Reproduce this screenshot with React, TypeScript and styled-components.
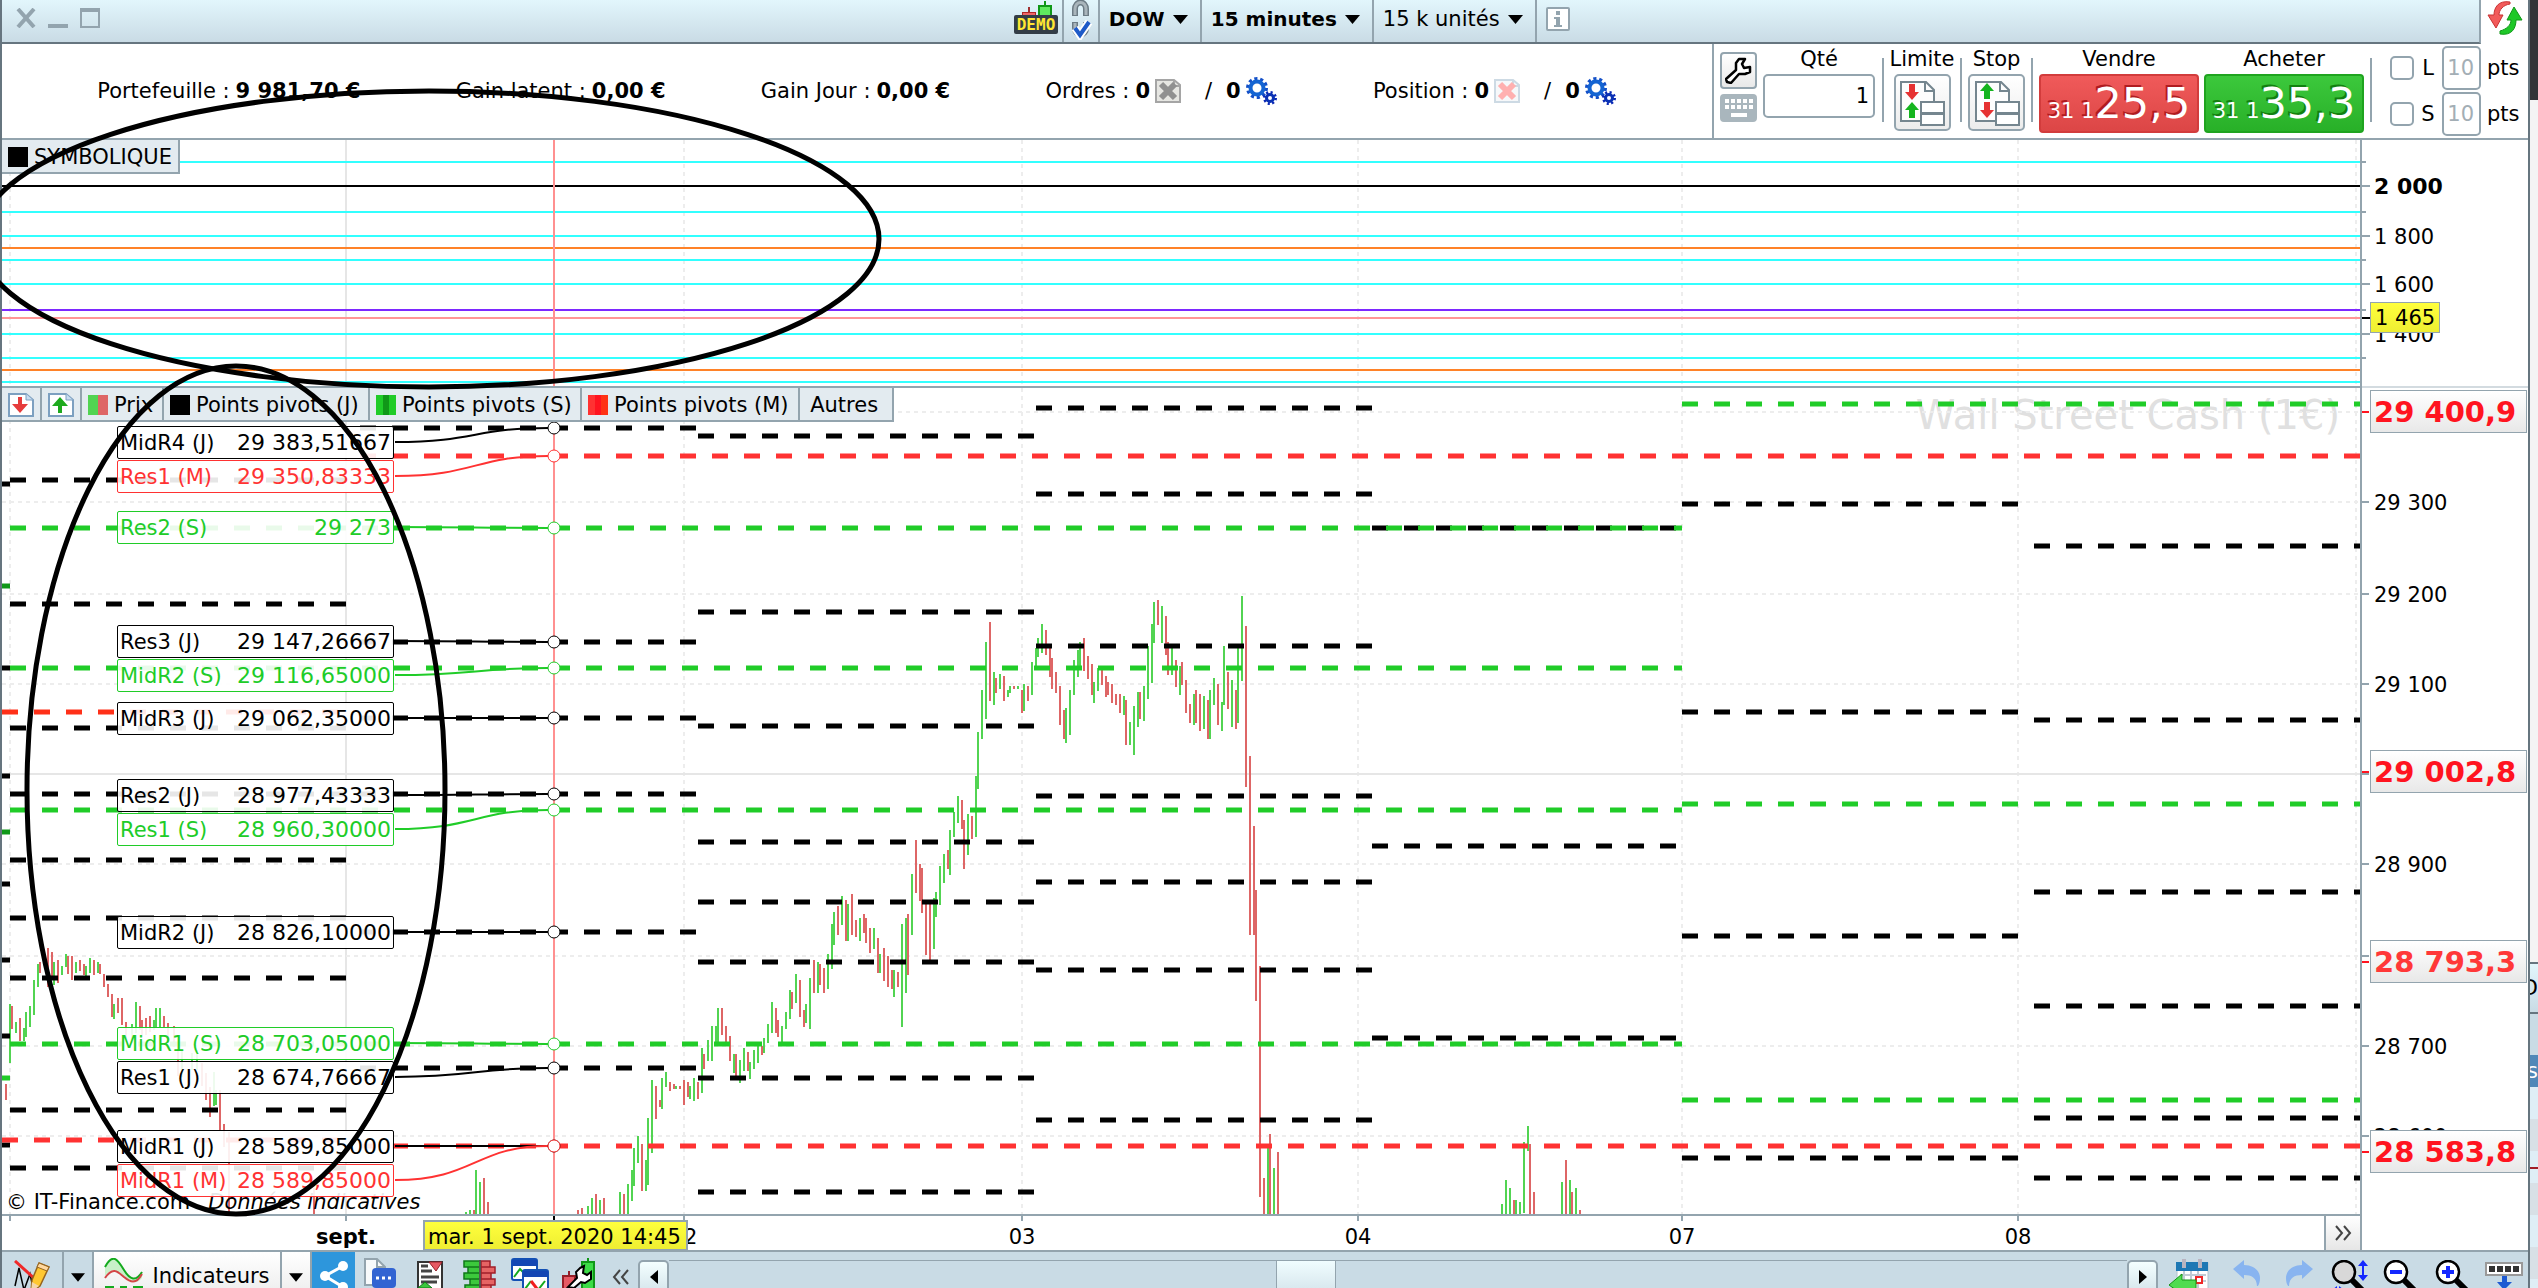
import React from "react";
import styled, { createGlobalStyle } from "styled-components";

const INK = "#000";
const EDGE = "#93a4ae";
const FRAME = "#66757f";
const BAR = "#c9dbe5";
const GREEN = "#20cc28";
const RED = "#ff3232";
const UP = "#52d452";
const DOWN = "#de6666";

const GlobalStyle = createGlobalStyle`
  *, *::before, *::after { box-sizing: border-box; }
  html, body, #root { height: 100%; }
  body { margin: 0; overflow: hidden; background: #fff; }
  body, button, input, select {
    font-family: "DejaVu Sans", Verdana, sans-serif;
    font-size: 21px;
    color: ${INK};
  }
  button, input, select { margin: 0; padding: 0; }
  svg { display: block; }
`;

/* ---------- shell ---------- */

const Desktop = styled.div`
  position: relative;
  display: flex;
  height: 100vh;
  overflow: hidden;
`;

const Window = styled.main`
  flex: 1;
  min-width: 0;
  display: flex;
  flex-direction: column;
  border: solid ${FRAME};
  border-width: 0 2px;
`;

const Behind = styled.aside`
  width: 8px;
  display: flex;
  flex-direction: column;
  overflow: hidden;
`;

const Slice = styled.div<{ $h: number; $bg: string; $line?: string; $ink?: string }>`
  flex: 0 0 ${(p) => p.$h}px;
  display: flex;
  align-items: center;
  justify-content: flex-end;
  background: ${(p) => p.$bg};
  border-bottom: ${(p) => (p.$line ? `2px solid ${p.$line}` : "0")};
  color: ${(p) => p.$ink || INK};
`;

const Annotations = styled.svg`
  position: absolute;
  inset: 0;
  width: 100%;
  height: 100%;
  pointer-events: none;
`;

/* ---------- title bar ---------- */

const TitleRow = styled.header`
  display: flex;
  height: 44px;
`;

const TitleBar = styled.div`
  flex: 1;
  display: flex;
  background: linear-gradient(#e2f6fc, ${BAR});
  border-bottom: 2px solid ${FRAME};
  border-right: 2px solid ${EDGE};
`;

const TitleSide = styled.div<{ $grow: number }>`
  flex: ${(p) => p.$grow} 1 0;
  display: flex;
  gap: 12px;
  padding: 8px 14px;
`;

const PlainButton = styled.button`
  border: 0;
  background: none;
  display: flex;
  align-items: flex-start;
  justify-content: center;
`;

const TitleCell = styled.div`
  display: flex;
  align-items: center;
  gap: 8px;
  height: 42px;
  padding: 0 12px 4px 9px;
  border-left: 2px solid ${EDGE};
`;

const IconCell = styled.div<{ $w: number; $line?: boolean }>`
  width: ${(p) => p.$w}px;
  display: flex;
  justify-content: center;
  border-left: ${(p) => (p.$line ? `2px solid ${EDGE}` : "0")};
`;

const FlatSelect = styled.select<{ $bold?: boolean }>`
  appearance: none;
  border: 0;
  background: none;
  font-size: ${(p) => (p.$bold ? 20 : 21)}px;
  font-weight: ${(p) => (p.$bold ? 700 : 400)};
`;

const LinkCell = styled.div`
  width: 47px;
  display: flex;
  justify-content: center;
`;

/* ---------- account bar ---------- */

const AccountRow = styled.section`
  display: flex;
  height: 96px;
  border-bottom: 2px solid ${EDGE};
`;

const Account = styled.div`
  flex: 1;
  display: flex;
  align-items: center;
  justify-content: space-evenly;
  border-right: 2px solid ${EDGE};
  white-space: nowrap;
`;

const Figure = styled.div`
  display: flex;
  align-items: center;
  gap: 6px;
`;

const Slash = styled.span`
  padding: 0 8px 0 18px;
`;

const Pair = styled.span`
  display: flex;
  align-items: center;
  gap: 5px;
`;

/* ---------- order panel ---------- */

const Orders = styled.form`
  flex: 0 0 814px;
  display: flex;
  padding-left: 6px;
`;

const Tools = styled.div`
  display: flex;
  flex-direction: column;
  gap: 5px;
  width: 37px;
  margin: 8px 5px 0 0;
`;

const ToolButton = styled.button<{ $h: number; $solid?: boolean }>`
  height: ${(p) => p.$h}px;
  display: flex;
  align-items: center;
  justify-content: center;
  border: 2px solid ${(p) => (p.$solid ? "#a9b6bd" : EDGE)};
  border-radius: 4px;
  background: ${(p) => (p.$solid ? "#a9b6bd" : "linear-gradient(#fff, #e9e9e9)")};
`;

const Column = styled.div<{ $w: number }>`
  width: ${(p) => p.$w}px;
  display: flex;
  flex-direction: column;
  align-items: center;
`;

const ColumnLabel = styled.label`
  line-height: 30px;
  white-space: nowrap;
`;

const Split = styled.div`
  width: 2px;
  height: 64px;
  margin: 14px 6px 0;
  background: ${EDGE};
`;

const Field = styled.input<{ $w: number; $muted?: boolean }>`
  width: ${(p) => p.$w}px;
  height: 44px;
  border: 2px solid ${EDGE};
  border-radius: 5px;
  background: #fff;
  text-align: right;
  padding-right: ${(p) => (p.$muted ? 5 : 4)}px;
  color: ${(p) => (p.$muted ? "#a3aeb5" : INK)};
`;

const ModeButton = styled.button`
  width: 57px;
  height: 57px;
  display: flex;
  align-items: center;
  justify-content: center;
  border: 2px solid ${EDGE};
  border-radius: 5px;
  background: linear-gradient(#fff, #ececec);
`;

const PriceButton = styled.button<{ $side: "sell" | "buy" }>`
  width: 160px;
  height: 59px;
  border-radius: 4px;
  border: 2px solid ${(p) => (p.$side === "sell" ? "#d23c3c" : "#1fa41f")};
  background: ${(p) =>
    p.$side === "sell" ? "linear-gradient(#f05a5a, #dc4646)" : "linear-gradient(#3cc83c, #28b028)"};
  color: #fff;
  text-shadow: -2px -2px 0 ${(p) => (p.$side === "sell" ? "#b01c20" : "#12800f")};
  white-space: nowrap;
  line-height: 54px;
`;

const BigPrice = styled.span`
  font-size: 43px;
`;

const Deals = styled.div`
  display: flex;
  gap: 5px;
`;

const Guards = styled.div`
  display: flex;
  flex-direction: column;
  gap: 2px;
  padding: 2px 0 0 12px;
`;

const Guard = styled.div`
  display: flex;
  align-items: center;
  gap: 6px;
  height: 44px;
`;

const Check = styled.input`
  appearance: none;
  width: 24px;
  height: 24px;
  border: 2px solid ${EDGE};
  border-radius: 5px;
  background: #fff;
`;

const GuardLabel = styled.label`
  width: 16px;
  text-align: center;
`;

/* ---------- charts ---------- */

const ChartRow = styled.section<{ $grow: number }>`
  flex: ${(p) => p.$grow} 1 0;
  min-height: 0;
  display: flex;
`;

const Plot = styled.div`
  position: relative;
  flex: 1;
  min-width: 0;
  overflow: hidden;
  border: solid ${EDGE};
  border-width: 0 2px 2px 0;
`;

const Axis = styled.div<{ $line?: boolean }>`
  position: relative;
  flex: 0 0 166px;
  overflow: hidden;
  border-bottom: ${(p) => (p.$line ? "2px solid #d3dbe0" : "0")};
`;

const Drawing = styled.svg`
  position: absolute;
  inset: 0;
  width: 100%;
  height: 100%;
`;

const Legend = styled.div`
  position: absolute;
  top: 0;
  left: 0;
  display: flex;
  height: 34px;
  border-bottom: 2px solid ${EDGE};
  background: #e3ebf0;
`;

const LegendItem = styled.button<{ $w: number }>`
  width: ${(p) => p.$w}px;
  display: flex;
  align-items: center;
  justify-content: flex-start;
  gap: 6px;
  padding: 1px 5px 0 6px;
  border: 0;
  border-right: 2px solid ${EDGE};
  background: none;
  white-space: nowrap;
`;

const Swatch = styled.span<{ $bg: string }>`
  flex: 0 0 20px;
  height: 20px;
  background: ${(p) => p.$bg};
`;

const Readout = styled.div<{ $y: number; $ink: string }>`
  position: absolute;
  left: 115px;
  top: ${(p) => p.$y - 388}px;
  width: 277px;
  height: 33px;
  display: flex;
  align-items: baseline;
  justify-content: space-between;
  padding: 0 2px;
  border: 1px solid ${(p) => p.$ink};
  border-radius: 2px;
  background: rgba(255, 255, 255, 0.9);
  color: ${(p) => p.$ink};
  line-height: 32px;
  white-space: nowrap;
`;

const ReadoutValue = styled.span`
  font-size: 22px;
`;

const Watermark = styled.div`
  position: absolute;
  top: 2px;
  right: 20px;
  font-size: 40px;
  line-height: 50px;
  color: #e0e0e0;
  white-space: nowrap;
`;

const Credit = styled.div`
  position: absolute;
  left: 4px;
  bottom: 0;
  display: flex;
  gap: 18px;
  line-height: 24px;
  white-space: nowrap;
`;

const PriceTag = styled.div<{ $y: number; $soft?: boolean }>`
  position: absolute;
  left: 8px;
  right: 1px;
  top: ${(p) => p.$y - 388}px;
  height: 43px;
  padding-left: 3px;
  border: 1px solid ${EDGE};
  background: linear-gradient(#fff, #e8e8e8);
  color: ${(p) => (p.$soft ? "#ff3838" : "#ff1420")};
  font-size: 29px;
  font-weight: 700;
  line-height: 42px;
  white-space: nowrap;
`;

const CursorTag = styled.div`
  position: absolute;
  left: 8px;
  top: 162px;
  width: 70px;
  height: 31px;
  padding-left: 4px;
  border: 1px solid ${EDGE};
  background: linear-gradient(#ffff3c, #eeee32);
  line-height: 30px;
  white-space: nowrap;
`;

/* ---------- time axis ---------- */

const TimeRow = styled.div`
  display: flex;
  height: 36px;
  border-bottom: 2px solid ${EDGE};
`;

const TimeScale = styled.div`
  position: relative;
  flex: 1;
  overflow: hidden;
`;

const DateTag = styled.div`
  position: absolute;
  left: 421px;
  top: 4px;
  width: 265px;
  height: 30px;
  padding-left: 3px;
  border: solid ${EDGE};
  border-width: 2px 2px 1px;
  background: linear-gradient(#ffff3c, #eeee32);
  line-height: 30px;
  white-space: nowrap;
`;

const MoreButton = styled.button`
  width: 38px;
  margin-right: 166px;
  display: flex;
  align-items: center;
  justify-content: center;
  border: solid ${EDGE};
  border-width: 0 2px;
  background: linear-gradient(#fff, #e6e6e6);
`;

/* ---------- bottom toolbar ---------- */

const Toolbar = styled.footer`
  display: flex;
  flex: 0 0 36px;
  overflow: hidden;
  background: ${BAR};
`;

const ToolCell = styled.button<{ $w: number; $bg?: string; $line?: boolean; $top?: number }>`
  flex: 0 0 ${(p) => p.$w}px;
  height: 36px;
  display: flex;
  align-items: flex-start;
  justify-content: center;
  gap: 8px;
  padding-top: ${(p) => p.$top ?? 8}px;
  border: 0;
  border-right: ${(p) => (p.$line ? `2px solid ${EDGE}` : "0")};
  background: ${(p) => p.$bg || "none"};
  overflow: hidden;
  white-space: nowrap;
`;

const CellText = styled.span`
  line-height: 36px;
`;

const ScrollButton = styled.button`
  flex: 0 0 31px;
  height: 40px;
  margin-top: 8px;
  display: flex;
  justify-content: center;
  padding-top: 8px;
  border: 2px solid ${EDGE};
  border-radius: 5px 5px 0 0;
  background: linear-gradient(#f4ffff, #cfe0e8);
`;

const Track = styled.div`
  flex: 1;
  height: 40px;
  margin-top: 8px;
  display: flex;
  border-top: 1px solid ${EDGE};
`;

const TrackGap = styled.div<{ $grow: number }>`
  flex: ${(p) => p.$grow} 1 0;
`;

const Thumb = styled.div`
  width: 60px;
  border: solid ${EDGE};
  border-width: 0 1px;
  background: linear-gradient(#f0fdff, #cfdfe7);
`;

/* ---------- data ---------- */

type Line = [ink: string, from: number, to: number, ys: number[]];

const PIVOTS: Line[] = [
  [INK, 2, 10, [484, 668, 776, 884, 960, 1036, 1145]],
  ["#109818", 2, 10, [586, 832]],
  [GREEN, 2, 10, [1078]],
  [INK, 10, 346, [480, 604, 728, 794, 860, 918, 978, 1110, 1168]],
  [INK, 360, 697, [428, 642, 718, 794, 932, 1068]],
  [INK, 698, 1034, [436, 612, 726, 842, 902, 962, 1078, 1192]],
  [INK, 1036, 1372, [408, 494, 646, 796, 882, 970, 1120]],
  [INK, 1372, 1682, [528, 846, 1038]],
  [INK, 1682, 2018, [504, 712, 936, 1158]],
  [INK, 2034, 2360, [546, 720, 892, 1006, 1118, 1178]],
  ["#ff3018", 2, 346, [712]],
  [RED, 2, 346, [1140]],
  [RED, 360, 2360, [456, 1146]],
  [GREEN, 10, 1682, [528, 668, 810, 1044]],
  [GREEN, 1682, 2360, [404, 804, 1100]],
];

type Batch = { x: number; y: number; sx: number; sy: number; bars: string };

/* Each bar is "x high low", prefixed by + for a rise and - for a fall. */
const BATCHES: Batch[] = [
  {
    x: 0, y: 830, sx: 0.4464, sy: 0.3333,
    bars: `-13 763 812|+22 522 698|-27 528 597|+36 576 609|-45 564 633|+54 594 633|+58 546 621|+67 528 591|+76 450 555|+85 402 471|-89 396 430|-107 354 470|-117 366 450|+121 396 465|-130 390 458|+139 408 435|+148 372 412|-152 378 432|-161 378 450|+170 396 430|-179 390 423|-188 402 434|+192 408 438|+201 384 428|-210 390 435|+219 396 428|-224 402 432|-233 432 471|-242 462 501|-251 492 562|+255 522 567|-264 504 549|-273 504 585|-282 576 625|+295 582 640|+304 516 610|-313 528 600|-318 570 620|-327 564 615|-336 558 605|+345 570 600|+349 534 590|+358 534 592|-367 558 595|-376 580 640|-390 588 650|-399 640 740|+408 660 740|+430 670 720|+441 660 720|-452 700 770|-461 730 812|-470 770 860|+480 727 830|+484 780 825|-493 780 900|-502 882 950|-512 905 1152|-704 1075 1152|+1044 1146 1152|+1053 1140 1152|-1062 1140 1152|+1066 1020 1152|+1075 1056 1152|-1084 1044 1152|-1093 1116 1152|-1294 1140 1152|-1303 1134 1152|+1317 1128 1152|+1326 1104 1152|-1335 1092 1152|+1344 1110 1152|-1353 1104 1152|+1389 1086 1152|-1398 1092 1152|+1407 1062 1152|+1415 1020 1112|+1420 955 1068|+1429 918 1000`,
  },
  {
    x: 640, y: 560, sx: 0.4337, sy: 0.4209,
    bars: `-4 1387 1498|+14 1425 1498|+18 1326 1485|+27 1235 1409|-37 1250 1328|-46 1283 1300|+50 1231 1304|+60 1216 1252|-69 1240 1262|-79 1245 1257|+83 1250 1257|-93 1250 1257|-101 1235 1295|-111 1240 1276|+115 1250 1281|+124 1231 1285|-133 1240 1281|+143 1159 1266|-147 1174 1209|+156 1140 1190|+166 1107 1190|+175 1107 1145|+180 1064 1150|-189 1064 1128|-198 1107 1145|-207 1131 1190|+216 1174 1219|-221 1174 1228|+230 1188 1243|+240 1159 1214|-249 1169 1214|+253 1193 1233|+263 1164 1209|+272 1150 1195|-281 1155 1176|+285 1136 1171|+295 1102 1147|+304 1050 1124|-313 1064 1124|-318 1093 1133|+327 1107 1145|+336 1074 1114|+346 1022 1090|-350 1026 1067|+359 984 1052|-368 998 1086|-378 1069 1109|+382 1055 1100|+392 993 1114|-401 950 1029|+410 955 1029|-415 960 1010|-424 969 1029|+433 936 1019|+442 865 972|+447 836 915|-456 822 891|+465 798 867|-475 808 905|+479 817 905|-489 794 891|-498 855 896|+507 851 905|-516 841 886|-521 851 910|-530 874 934|+539 874 924|-548 898 981|+553 936 981|-562 922 1000|-572 941 1014|-581 974 1019|+585 974 1038|-595 979 1014|+604 865 1109|+613 851 1029|-618 841 986|+627 746 891|-636 665 791|-646 722 810|-650 732 839|-659 815 938|-668 815 950|+678 803 924|+683 789 848|+691 727 820|+701 698 767|-710 689 734|+715 641 748|+724 599 658|+733 561 625|-742 570 639|-747 618 734|+756 603 701|-765 608 663|+774 513 658|+779 409 544|+788 309 425|+797 195 378|-807 147 335|+816 266 344|-821 280 316|+830 271 306|-839 276 335|+848 309 325|+853 299 316|-862 299 306|+871 299 306|-881 309 363|+885 295 359|-894 299 335|+904 242 321|+913 209 255|+917 185 230|+927 152 221|-936 166 226|-945 209 278|-950 233 306|-959 266 316|-968 299 392|-977 356 425|+982 352 435|+991 309 416|+1000 238 321|+1010 214 278|+1014 195 255|-1024 185 264|-1033 228 283|-1042 247 321|+1047 290 340|+1056 257 311|-1065 257 297|-1074 276 325|-1079 290 321|-1088 295 340|-1097 318 344|-1107 318 363|+1116 323 368|-1120 333 440|+1130 385 440|+1139 347 463|+1148 314 397|-1153 314 378|+1162 299 382|+1171 204 330|+1180 152 292|+1185 100 197|-1194 95 154|+1203 109 197|-1213 133 226|-1217 195 273|+1227 209 273|-1236 238 302|+1245 252 321|-1249 242 297|-1259 285 363|-1268 342 387|+1277 318 392|-1282 309 387|-1291 318 406|+1300 323 402|-1309 333 425|+1314 309 425|+1323 280 344|-1332 295 392|+1342 337 406|+1346 204 344|-1356 266 354|+1365 285 397|-1374 309 402|+1379 209 387|+1388 86 287|-1397 157 539|-1407 466 891|-1416 632 891|-1420 784 1048|-1429 965 1513|-1439 1468 1554|+1448 1395 1554|-1452 1364 1554|+1462 1444 1554|-1471 1406 1554`,
  },
  {
    x: 1300, y: 380, sx: 0.4719, sy: 0.5357,
    bars: `+428 1538 1557|+436 1493 1557|+445 1508 1557|-453 1531 1557|+458 1531 1557|+466 1534 1557|+475 1422 1555|+483 1393 1439|-487 1427 1557|-496 1516 1557|+555 1497 1557|-564 1456 1557|+572 1493 1557|-576 1516 1557|+585 1508 1557|-593 1549 1557`,
  },
];

const READOUTS: { name: string; value: string; ink: string; y: number; target: number }[] = [
  { name: "MidR4 (J)", value: "29 383,51667", ink: INK, y: 426, target: 428 },
  { name: "Res1 (M)", value: "29 350,83333", ink: RED, y: 460, target: 456 },
  { name: "Res2 (S)", value: "29 273", ink: GREEN, y: 511, target: 528 },
  { name: "Res3 (J)", value: "29 147,26667", ink: INK, y: 625, target: 642 },
  { name: "MidR2 (S)", value: "29 116,65000", ink: GREEN, y: 659, target: 668 },
  { name: "MidR3 (J)", value: "29 062,35000", ink: INK, y: 702, target: 718 },
  { name: "Res1 (S)", value: "28 960,30000", ink: GREEN, y: 813, target: 810 },
  { name: "Res2 (J)", value: "28 977,43333", ink: INK, y: 779, target: 794 },
  { name: "MidR2 (J)", value: "28 826,10000", ink: INK, y: 916, target: 932 },
  { name: "MidR1 (S)", value: "28 703,05000", ink: GREEN, y: 1027, target: 1044 },
  { name: "Res1 (J)", value: "28 674,76667", ink: INK, y: 1061, target: 1068 },
  { name: "MidR1 (J)", value: "28 589,85000", ink: INK, y: 1130, target: 1146 },
  { name: "MidR1 (M)", value: "28 589,85000", ink: RED, y: 1164, target: 1146 },
];

const DAYS = [10, 684, 1022, 1358, 1682, 2018, 2356];
const LEVELS = [412, 502, 594, 684, 864, 956, 1046, 1136];

const SYMBOL_LINES: [string, number][] = [
  ["#32ffff", 162], [INK, 186], ["#32ffff", 212], ["#32ffff", 236], ["#ff8228", 248],
  ["#32ffff", 260], ["#32ffff", 284], ["#7d28ff", 310], ["#ff9696", 318], ["#32ffff", 334],
  ["#32ffff", 358], ["#ff8228", 370], ["#32ffff", 382],
];

/* ---------- drawings ---------- */

const Caret = ({ size = 15 }: { size?: number }) => (
  <svg width={size} height="9" viewBox="0 0 15 9" aria-hidden="true"><path d="M0 0h15L7.500 9z" /></svg>
);

const DemoIcon = () => (
  <svg width="44" height="36" viewBox="0 0 44 36" aria-label="Démo">
    <path d="M15 7v6" stroke="#a03030" strokeWidth="2" />
    <path d="M31 1v6" stroke="#109818" strokeWidth="2" />
    <rect x="8.500" y="12.500" width="13" height="8" fill="#e66" stroke="#b02828" />
    <rect x="25" y="6" width="12" height="14" fill="#5fe85f" stroke="#109818" strokeWidth="2" />
    <rect x="0" y="15" width="44" height="19" rx="2" fill="#333d47" />
    <text x="22" y="30" textAnchor="middle" fontFamily="DejaVu Sans Mono" fontWeight="700" fontSize="16" fill="#ffe632">DEMO</text>
  </svg>
);

const ClipIcon = () => (
  <svg width="24" height="40" viewBox="0 0 24 40" aria-hidden="true">
    <g fill="none" stroke="#6c7b84" strokeWidth="6">
      <path d="M6 16V9a5 6 0 0 1 11 0v7" />
      <path d="M6 22v6a5 6 0 0 0 11 0v-6" />
    </g>
    <g fill="none" stroke="#a9b5bb" strokeWidth="3">
      <path d="M6 15V9a5 6 0 0 1 11 0v6" />
      <path d="M6 23v5a5 6 0 0 0 11 0v-5" />
    </g>
    <path d="M6 28l5 7 9-13" fill="none" stroke="#fff" strokeWidth="8" />
    <path d="M6 28l5 7 9-13" fill="none" stroke="#1e5ac8" strokeWidth="4" />
  </svg>
);

const InfoIcon = () => (
  <svg width="24" height="24" viewBox="0 0 24 24" aria-hidden="true">
    <rect x="1" y="1" width="22" height="22" rx="1" fill="#fff" stroke={EDGE} strokeWidth="2" />
    <path d="M10 4h4v4h-4zM8 10h6v8h2v2H8v-2h2v-6H8z" fill={EDGE} />
  </svg>
);

const LinkIcon = () => (
  <svg width="38" height="36" viewBox="0 0 38 36" aria-hidden="true">
    <path d="M24 2C12 0 8 8 8 15H2l8 13 7-13h-4c0-5 4-10 11-11z" fill="#f25a5a" stroke="#c83232" />
    <path d="M14 34c12 2 16-6 16-14h6L28 7l-7 13h4c0 5-4 9-11 11z" fill="#1ec828" stroke="#109818" />
  </svg>
);

const DocCross = ({ paper, edge, cross }: { paper: string; edge: string; cross: string }) => (
  <svg width="26" height="24" viewBox="0 0 26 24" aria-hidden="true">
    <path d="M1 1h18l6 5v17H1z" fill={paper} stroke={edge} strokeWidth="2" />
    <path d="M19 1v6h6" fill="none" stroke={edge} strokeWidth="2" />
    <path d="M6 5l14 14M20 5L6 19" stroke={cross} strokeWidth="6" />
  </svg>
);

const Gears = () => (
  <svg width="32" height="28" viewBox="0 0 32 28" aria-hidden="true">
    <circle cx="11" cy="11" r="9" fill="none" stroke="#1450c8" strokeWidth="4" strokeDasharray="3 2.650" />
    <circle cx="11" cy="11" r="6.500" fill="#fff" stroke="#1464d2" strokeWidth="4" />
    <circle cx="24" cy="21" r="5.500" fill="none" stroke="#0a28b4" strokeWidth="3" strokeDasharray="2 2.300" />
    <circle cx="24" cy="21" r="3.500" fill="#fff" stroke="#0a32b4" strokeWidth="3" />
  </svg>
);

const Wrench = () => (
  <svg width="27" height="27" viewBox="0 0 27 27" aria-hidden="true">
    <path d="M14 2h6l-3 5 2 4 6-1v5l-5 2h-6l-8 9-4-1-1-3 10-9V6z" fill="#fff" stroke={INK} strokeWidth="2.500" strokeLinejoin="round" />
  </svg>
);

const Keyboard = () => (
  <svg width="30" height="20" viewBox="0 0 30 20" aria-hidden="true">
    <path d="M1 3h28M1 9h28" stroke="#fff" strokeWidth="4" strokeDasharray="4 2" />
    <path d="M7 17h16" stroke="#fff" strokeWidth="4" />
  </svg>
);

const ModeIcon = ({ stop }: { stop?: boolean }) => (
  <svg width="46" height="46" viewBox="0 0 46 46" aria-hidden="true">
    <path d="M2 2h25l8 8v31H2z" fill="#fdfdfd" stroke="#75868f" strokeWidth="2" />
    <path d="M26 2v9h9" fill="none" stroke="#75868f" strokeWidth="2" />
    {stop ? (
      <>
        <path d="M13 3l7 8h-4v8h-6v-8H6z" fill="#14b41e" />
        <path d="M13 38l7-8h-4v-8h-6v8H6z" fill="#e63232" />
      </>
    ) : (
      <>
        <path d="M13 20l7-8h-4V4h-6v8H6z" fill="#e63232" />
        <path d="M13 22l7 8h-4v8h-6v-8H6z" fill="#14b41e" />
      </>
    )}
    <rect x="22" y="22" width="23" height="11" fill="#fff" stroke="#75868f" strokeWidth="2" />
    <rect x="22" y="34" width="23" height="11" fill="#fff" stroke="#75868f" strokeWidth="2" />
  </svg>
);

const DocArrow = ({ up }: { up?: boolean }) => (
  <svg width="26" height="24" viewBox="0 0 26 24" aria-hidden="true">
    <path d="M1 1h17l7 6v16H1z" fill="#fff" stroke="#7da0c0" strokeWidth="2" />
    <path d="M18 1v6h7" fill="#c8dcf0" stroke="#7da0c0" />
    {up ? (
      <path d="M12 4l8 9h-6v7h-4v-7H4z" fill="#1eaa1e" />
    ) : (
      <path d="M12 20l8-9h-6V4h-4v7H4z" fill="#e63c3c" />
    )}
  </svg>
);

const Grid = ({ top, bottom }: { top: number; bottom: number }) => (
  <g stroke="#ededed" strokeWidth="2">
    {DAYS.map((x) => <path key={x} d={`M${x} ${top}V${bottom}`} strokeDasharray="4 4" />)}
    <path d={`M346 ${top}V${bottom}`} stroke="#e6e6e6" />
  </g>
);

const Pivots = () => (
  <g strokeWidth="5" strokeDasharray="16 16">
    {PIVOTS.map(([ink, from, to, ys]) =>
      ys.map((y) => <path key={`${ink}${from}${y}`} d={`M${from} ${y}H${to}`} stroke={ink} />)
    )}
  </g>
);

const Candles = () => (
  <>
    {BATCHES.map((b) => (
      <g key={b.x} shapeRendering="crispEdges">
        {b.bars.split("|").map((bar) => {
          const [x, high, low] = bar.slice(1).split(" ").map(Number);
          return (
            <rect
              key={bar}
              x={Math.round(b.x + x * b.sx) - 1}
              y={Math.round(b.y + high * b.sy)}
              width="2"
              height={Math.max(2, Math.round((low - high) * b.sy))}
              fill={bar[0] === "+" ? UP : DOWN}
            />
          );
        })}
      </g>
    ))}
  </>
);

const Leaders = () => (
  <>
    {READOUTS.map((r) => (
      <path
        key={r.name}
        d={`M395 ${r.y + 16}C475 ${r.y + 16} 475 ${r.target} 548 ${r.target}`}
        fill="none"
        stroke={r.ink}
        strokeWidth="2"
      />
    ))}
    {READOUTS.map((r) => (
      <circle key={r.name} cx="554" cy={r.target} r="6" fill="#fff" stroke={r.ink} />
    ))}
  </>
);

const Chevrons = ({ flip }: { flip?: boolean }) => (
  <svg width="18" height="16" viewBox="0 0 18 16" aria-hidden="true">
    <path
      d={flip ? "M8 1L2 8l6 7M16 1l-6 7 6 7" : "M2 1l6 7-6 7M10 1l6 7-6 7"}
      fill="none" stroke="#444" strokeWidth="2"
    />
  </svg>
);

const PencilIcon = () => (
  <svg width="38" height="32" viewBox="0 0 38 32" aria-hidden="true">
    <path d="M2 26L6 8l5 22 6-16 4 18" fill="none" stroke={INK} strokeWidth="1.500" />
    <path d="M2 1l20 18" stroke="#f02828" strokeWidth="3" />
    <path d="M26 3l10 4-9 19-9 6 1-12z" fill="#ffc832" stroke="#96641e" strokeWidth="1.500" />
    <path d="M26 3l10 4-2 4-10-4z" fill="#ffd8a0" stroke="#96641e" />
    <path d="M19 22l7 4-8 6z" fill="#f5d7aa" />
  </svg>
);

const WavesIcon = () => (
  <svg width="40" height="32" viewBox="0 0 40 32" aria-hidden="true">
    <path d="M1 9C9-6 14 2 20 12s12 12 18 2v6c-7 8-12 3-18-2S8 8 1 18z" fill="#c8f0c8" />
    <path d="M1 9C9-6 14 2 20 12s12 12 18 2" fill="none" stroke="#14aa1e" strokeWidth="2" />
    <path d="M1 20c8-12 13-6 19-1s12 8 18-3" fill="none" stroke="#d24646" strokeWidth="2" />
    <path d="M1 28h9v4H1zM16 28h7v4h-7zM29 28h10v4H29z" fill="#14aa1e" />
  </svg>
);

const ShareIcon = () => (
  <svg width="30" height="32" viewBox="0 0 30 32" aria-hidden="true">
    <path d="M24 6L6 16l18 11" fill="none" stroke="#fff" strokeWidth="3" />
    <circle cx="24" cy="6" r="5" fill="#fff" />
    <circle cx="6" cy="16" r="5" fill="#fff" />
    <circle cx="24" cy="27" r="5" fill="#fff" />
  </svg>
);

const ChatDocIcon = () => (
  <svg width="34" height="30" viewBox="0 0 34 30" aria-hidden="true">
    <path d="M2 1h12l8 8v18H2z" fill="#f8fafb" stroke={EDGE} strokeWidth="2" />
    <path d="M14 1v8h8" fill="none" stroke={EDGE} strokeWidth="2" />
    <rect x="9" y="10" width="24" height="20" rx="4" fill="#3264d2" />
    <path d="M13 20h3M19 20h3M25 20h3" stroke="#fff" strokeWidth="3" />
  </svg>
);

const ReportIcon = () => (
  <svg width="28" height="28" viewBox="0 0 28 28" aria-hidden="true">
    <rect x="2" y="2" width="24" height="30" fill="#fff" stroke="#333" strokeWidth="2" />
    <path d="M5 6h7M5 11h11M5 17h18M5 22h16" stroke="#444" strokeWidth="3" />
    <path d="M13 2h13l-6 9z" fill="#e65a64" stroke="#961e28" />
    <path d="M2 28l7-6 7 6z" fill="#3cc83c" stroke="#107818" />
  </svg>
);

const BookIcon = () => (
  <svg width="34" height="30" viewBox="0 0 34 30" aria-hidden="true">
    <g fill="#3cc83c" stroke="#0f7818" strokeWidth="1.500">
      <path d="M1 1h16v6H1zM5 7h12v6H5zM1 13h16v6H1zM7 19h10v6H7zM2 25h15v6H2z" />
    </g>
    <g fill="#e66464" stroke="#a01e28" strokeWidth="1.500">
      <path d="M18 1h9v6h-9zM18 7h14v6H18zM18 13h10v6H18zM18 19h14v6H18zM18 25h10v6H18z" />
    </g>
    <path d="M17 0v30" stroke="#555" strokeWidth="2" />
  </svg>
);

const WindowsIcon = () => (
  <svg width="38" height="32" viewBox="0 0 38 32" aria-hidden="true">
    <rect x="1" y="1" width="25" height="21" rx="2" fill="#fff" stroke="#1450b4" strokeWidth="2" />
    <path d="M1 2h25v6H1z" fill="#1446b4" />
    <path d="M3 19l6-8 5 5" fill="none" stroke="#14aa1e" strokeWidth="2" />
    <rect x="12" y="12" width="25" height="22" rx="2" fill="#fff" stroke="#1450b4" strokeWidth="2" />
    <path d="M12 13h25v6H12z" fill="#1446b4" />
    <path d="M14 31l6-8" stroke="#14aa1e" strokeWidth="2" />
    <path d="M20 23l7 9" stroke="#f01e1e" strokeWidth="3" />
    <path d="M27 32l7-9" stroke="#14aa1e" strokeWidth="2" />
  </svg>
);

const SettingsIcon = () => (
  <svg width="34" height="32" viewBox="0 0 34 32" aria-hidden="true">
    <path d="M7 13v6" stroke="#961e28" strokeWidth="2" />
    <path d="M26 0v6" stroke="#109818" strokeWidth="2" />
    <rect x="1" y="18" width="12" height="16" fill="#e65a64" stroke="#961e28" strokeWidth="2" />
    <rect x="20" y="4" width="12" height="28" fill="#3cdc46" stroke="#109818" strokeWidth="2" />
    <path d="M18 10l4-2-1 7 4 2 4-3v7l-6 4-4-1-7 6-6-1 9-9-1-6z" fill="#fff" stroke={INK} strokeWidth="2" />
  </svg>
);

const CalendarIcon = () => (
  <svg width="42" height="32" viewBox="0 0 42 32" aria-hidden="true">
    <rect x="9" y="5" width="31" height="28" fill="#fff" stroke="#b4c3cc" />
    <path d="M12 17h26M12 23h26M16 13v18M23 13v18M30 13v18" stroke="#c0ccd4" strokeWidth="2" />
    <rect x="8" y="4" width="32" height="9" fill="#1e78b4" />
    <path d="M16 1v9M32 1v9" stroke="#b9b4c0" strokeWidth="4" />
    <rect x="28" y="19" width="6" height="6" fill="#fff" stroke="#f02828" strokeWidth="2" />
    <path d="M1 27l13-11v6h14v10H8z" fill="#50dc50" stroke="#149614" />
  </svg>
);

const UndoIcon = ({ redo }: { redo?: boolean }) => (
  <svg width="30" height="26" viewBox="0 0 30 26" aria-hidden="true">
    <path
      transform={redo ? "translate(30 0) scale(-1 1)" : undefined}
      d="M1 9l11-9v5c10 0 16 6 16 13 0 4-1 7-3 9 0-9-5-12-13-12v4z"
      fill="#88b4f0"
    />
  </svg>
);

const LensIcon = ({ kind }: { kind: "fit" | "minus" | "plus" }) => (
  <svg width="40" height="30" viewBox="0 0 40 30" aria-hidden="true">
    <path d="M22 20l10 10" stroke={INK} strokeWidth="6" />
    <circle cx="14" cy="12" r="11" fill={kind === "fit" ? "#d8d8d8" : "#fff"} stroke={INK} strokeWidth="2.500" />
    {kind !== "fit" && <path d="M8 12h12" stroke="#1428ff" strokeWidth="4" />}
    {kind === "plus" && <path d="M14 6v12" stroke="#1428ff" strokeWidth="4" />}
    {kind === "fit" && (
      <path d="M33 0l5 6h-4v9h4l-5 6-5-6h4V6h-4zM2 30l5-4v4zM14 30l-5-4v4z" fill="#1428ff" />
    )}
  </svg>
);

const DockIcon = () => (
  <svg width="38" height="30" viewBox="0 0 38 30" aria-hidden="true">
    <rect x="1" y="1" width="36" height="12" fill="#fff" stroke="#999" strokeWidth="2" />
    <path d="M4 7h30" stroke="#333" strokeWidth="6" strokeDasharray="6 2" />
    <path d="M17 14h5v6h5l-8 8-7-8h5z" fill="#1e5ad2" />
  </svg>
);

/* ---------- page ---------- */

const Picker = ({ label, value, bold }: { label: string; value: string; bold?: boolean }) => (
  <TitleCell>
    <FlatSelect aria-label={label} defaultValue={value} $bold={bold}>
      <option>{value}</option>
    </FlatSelect>
    <Caret />
  </TitleCell>
);

const GuardRow = ({ id, name }: { id: string; name: string }) => (
  <Guard>
    <Check type="checkbox" id={id} />
    <GuardLabel htmlFor={id}>{name}</GuardLabel>
    <Field $w={39} $muted type="text" defaultValue="10" aria-label={`${name} points`} />
    <span>pts</span>
  </Guard>
);

export default function App() {
  return (
    <Desktop>
      <GlobalStyle />
      <Window>
        <TitleRow>
          <TitleBar>
            <TitleSide $grow={1010}>
              <PlainButton type="button" aria-label="Fermer">
                <svg width="20" height="20"><path d="M2 1l16 18M18 1L2 19" stroke={EDGE} strokeWidth="4" /></svg>
              </PlainButton>
              <PlainButton type="button" aria-label="Réduire">
                <svg width="20" height="20"><path d="M0 18h20" stroke={EDGE} strokeWidth="4" /></svg>
              </PlainButton>
              <PlainButton type="button" aria-label="Agrandir">
                <svg width="20" height="20">
                  <path d="M1 1h18v18H1z" fill="none" stroke={EDGE} strokeWidth="2" />
                  <path d="M0 2h20" stroke={EDGE} strokeWidth="4" />
                </svg>
              </PlainButton>
            </TitleSide>
            <IconCell $w={52}><DemoIcon /></IconCell>
            <IconCell $w={36} $line><ClipIcon /></IconCell>
            <Picker label="Valeur" value="DOW" bold />
            <Picker label="Période" value="15 minutes" bold />
            <Picker label="Historique" value="15 k unités" />
            <TitleCell><InfoIcon /></TitleCell>
            <TitleSide $grow={896} />
          </TitleBar>
          <LinkCell><LinkIcon /></LinkCell>
        </TitleRow>

        <AccountRow>
          <Account>
            <Figure><span>Portefeuille :</span><b>9 981,70 €</b></Figure>
            <Figure><span>Gain latent :</span><b>0,00 €</b></Figure>
            <Figure><span>Gain Jour :</span><b>0,00 €</b></Figure>
            <Figure>
              <span>Ordres :</span>
              <Pair><b>0</b><DocCross paper="#e6e6e2" edge="#a5a5a5" cross="#909090" /></Pair>
              <Slash>/</Slash>
              <Pair><b>0</b><Gears /></Pair>
            </Figure>
            <Figure>
              <span>Position :</span>
              <Pair><b>0</b><DocCross paper="#f6f8fa" edge="#cddae4" cross="#ffb0b0" /></Pair>
              <Slash>/</Slash>
              <Pair><b>0</b><Gears /></Pair>
            </Figure>
          </Account>
          <Orders onSubmit={(e) => e.preventDefault()}>
            <Tools>
              <ToolButton type="button" $h={37} aria-label="Réglages"><Wrench /></ToolButton>
              <ToolButton type="button" $h={28} $solid aria-label="Clavier"><Keyboard /></ToolButton>
            </Tools>
            <Column $w={114}>
              <ColumnLabel htmlFor="qty">Qté</ColumnLabel>
              <Field id="qty" $w={112} type="text" defaultValue="1" />
            </Column>
            <Split />
            <Column $w={64}>
              <ColumnLabel htmlFor="limit">Limite</ColumnLabel>
              <ModeButton id="limit" type="button"><ModeIcon /></ModeButton>
            </Column>
            <Split />
            <Column $w={57}>
              <ColumnLabel htmlFor="stop">Stop</ColumnLabel>
              <ModeButton id="stop" type="button"><ModeIcon stop /></ModeButton>
            </Column>
            <Split />
            <Deals>
              <Column $w={160}>
                <ColumnLabel htmlFor="sell">Vendre</ColumnLabel>
                <PriceButton id="sell" type="button" $side="sell">31 1<BigPrice>25,5</BigPrice></PriceButton>
              </Column>
              <Column $w={160}>
                <ColumnLabel htmlFor="buy">Acheter</ColumnLabel>
                <PriceButton id="buy" type="button" $side="buy">31 1<BigPrice>35,3</BigPrice></PriceButton>
              </Column>
            </Deals>
            <Split />
            <Guards>
              <GuardRow id="guard-l" name="L" />
              <GuardRow id="guard-s" name="S" />
            </Guards>
          </Orders>
        </AccountRow>

        <ChartRow $grow={248}>
          <Plot>
            <Drawing aria-hidden="true">
              <g transform="translate(-2 -140)">
                <Grid top={140} bottom={386} />
                {SYMBOL_LINES.map(([ink, y]) => (
                  <path key={y} d={`M2 ${y}H5000`} stroke={ink} strokeWidth="2" />
                ))}
                <path d="M554 140V386" stroke="#ff9090" strokeWidth="2" />
              </g>
            </Drawing>
            <Legend>
              <LegendItem type="button" $w={178}><Swatch $bg={INK} />SYMBOLIQUE</LegendItem>
            </Legend>
          </Plot>
          <Axis $line>
            <Drawing>
              <g transform="translate(0 -140)" fontSize="21">
                <path d="M0 162h4M0 186h8M0 212h4M0 236h8M0 260h4M0 284h8M0 310h4M0 334h8M0 358h4" stroke={EDGE} strokeWidth="2" />
                <path d="M0 318h8" stroke={INK} strokeWidth="2" />
                <text x="12" y="194" fontWeight="700" fontSize="22">2 000</text>
                <text x="12" y="244">1 800</text>
                <text x="12" y="292">1 600</text>
                <text x="12" y="342">1 400</text>
              </g>
            </Drawing>
            <CursorTag>1 465</CursorTag>
          </Axis>
        </ChartRow>

        <ChartRow $grow={828}>
          <Plot>
            <Watermark>Wall Street Cash (1€)</Watermark>
            <Drawing aria-hidden="true">
              <g transform="translate(-2 -388)">
                <Grid top={388} bottom={1214} />
                {LEVELS.map((y) => (
                  <path key={y} d={`M2 ${y}H5000`} stroke="#ededed" strokeWidth="2" strokeDasharray="4 4" />
                ))}
                <path d="M2 774H5000" stroke="#e6e6e6" strokeWidth="2" />
                <Candles />
                <Pivots />
                <path d="M554 388V1214" stroke="#ff9090" strokeWidth="2" />
                <Leaders />
              </g>
            </Drawing>
            <Credit><span>© IT-Finance.com</span><i>Données indicatives</i></Credit>
            {READOUTS.map((r) => (
              <Readout key={r.name} $y={r.y} $ink={r.ink}>
                <span>{r.name}</span><ReadoutValue>{r.value}</ReadoutValue>
              </Readout>
            ))}
            <Legend>
              <LegendItem type="button" $w={40} aria-label="Déplacer vers le bas"><DocArrow /></LegendItem>
              <LegendItem type="button" $w={40} aria-label="Déplacer vers le haut"><DocArrow up /></LegendItem>
              <LegendItem type="button" $w={82}><Swatch $bg="linear-gradient(90deg, #52d452 50%, #de6666 50%)" />Prix</LegendItem>
              <LegendItem type="button" $w={206}><Swatch $bg={INK} />Points pivots (J)</LegendItem>
              <LegendItem type="button" $w={212}><Swatch $bg="linear-gradient(90deg, #20cc28 33%, #109818 33% 67%, #20cc28 67%)" />Points pivots (S)</LegendItem>
              <LegendItem type="button" $w={218}><Swatch $bg="linear-gradient(90deg, #ff3232 33%, #ff1420 33% 67%, #ff3214 67%)" />Points pivots (M)</LegendItem>
              <LegendItem type="button" $w={94}><span>&#8202;&#8202;Autres</span></LegendItem>
            </Legend>
          </Plot>
          <Axis>
            <Drawing>
              <g transform="translate(0 -388)" fontSize="21">
                <path d="M0 502h7M0 594h7M0 684h7M0 774h7M0 864h7M0 956h7M0 1046h7M0 1136h7" stroke={EDGE} strokeWidth="2" />
                <path d="M0 412h7M0 772h7M0 962h7M0 1152h7" stroke="#ff1420" strokeWidth="2" />
                <text x="12" y="510">29 300</text>
                <text x="12" y="602">29 200</text>
                <text x="12" y="692">29 100</text>
                <text x="12" y="872">28 900</text>
                <text x="12" y="1054">28 700</text>
                <text x="12" y="1144">28 600</text>
              </g>
            </Drawing>
            <PriceTag $y={390}>29 400,9</PriceTag>
            <PriceTag $y={750}>29 002,8</PriceTag>
            <PriceTag $y={940} $soft>28 793,3</PriceTag>
            <PriceTag $y={1130}>28 583,8</PriceTag>
          </Axis>
        </ChartRow>

        <TimeRow>
          <TimeScale>
            <Drawing>
              <g transform="translate(-2 -1216)" textAnchor="middle" fontSize="21">
                <path d="M10 1216v5M346 1216v5M684 1216v5M1022 1216v5M1358 1216v5M1682 1216v5M2018 1216v5" stroke={EDGE} strokeWidth="2" />
                <path d="M554 1216v5" stroke={INK} strokeWidth="2" />
                <text x="346" y="1244" fontWeight="700">sept.</text>
                <text x="684" y="1244">02</text>
                <text x="1022" y="1244">03</text>
                <text x="1358" y="1244">04</text>
                <text x="1682" y="1244">07</text>
                <text x="2018" y="1244">08</text>
              </g>
            </Drawing>
            <DateTag>mar. 1 sept. 2020 14:45</DateTag>
          </TimeScale>
          <MoreButton type="button" aria-label="Suite"><Chevrons /></MoreButton>
        </TimeRow>

        <Toolbar>
          <ToolCell type="button" $w={62} $line aria-label="Dessin"><PencilIcon /></ToolCell>
          <ToolCell type="button" $w={30} $line $top={21} aria-label="Outils de dessin"><Caret size={14} /></ToolCell>
          <ToolCell type="button" $w={188} $line $top={6} $bg="linear-gradient(#fff, #f0f0f0)">
            <WavesIcon /><CellText>Indicateurs</CellText>
          </ToolCell>
          <ToolCell type="button" $w={30} $line $top={21} $bg="linear-gradient(#fff, #f0f0f0)" aria-label="Liste des indicateurs"><Caret size={14} /></ToolCell>
          <ToolCell type="button" $w={43} $bg="#2d96dc" aria-label="Partager"><ShareIcon /></ToolCell>
          <ToolCell type="button" $w={50} $top={6} aria-label="Notes"><ChatDocIcon /></ToolCell>
          <ToolCell type="button" $w={50} aria-label="Rapport"><ReportIcon /></ToolCell>
          <ToolCell type="button" $w={50} aria-label="Carnet"><BookIcon /></ToolCell>
          <ToolCell type="button" $w={50} $top={6} aria-label="Fenêtres"><WindowsIcon /></ToolCell>
          <ToolCell type="button" $w={48} $top={6} aria-label="Configuration"><SettingsIcon /></ToolCell>
          <ToolCell type="button" $w={35} $top={17} aria-label="Replier"><Chevrons flip /></ToolCell>
          <ScrollButton type="button" aria-label="Défiler à gauche">
            <svg width="8" height="14"><path d="M8 0v14L0 7z" /></svg>
          </ScrollButton>
          <Track>
            <TrackGap $grow={607} />
            <Thumb />
            <TrackGap $grow={790} />
          </Track>
          <ScrollButton type="button" aria-label="Défiler à droite">
            <svg width="8" height="14"><path d="M0 0v14l8-7z" /></svg>
          </ScrollButton>
          <ToolCell type="button" $w={62} $top={6} aria-label="Aller à la date"><CalendarIcon /></ToolCell>
          <ToolCell type="button" $w={54} aria-label="Annuler"><UndoIcon /></ToolCell>
          <ToolCell type="button" $w={50} aria-label="Rétablir"><UndoIcon redo /></ToolCell>
          <ToolCell type="button" $w={52} aria-label="Ajuster"><LensIcon kind="fit" /></ToolCell>
          <ToolCell type="button" $w={52} aria-label="Zoom arrière"><LensIcon kind="minus" /></ToolCell>
          <ToolCell type="button" $w={52} aria-label="Zoom avant"><LensIcon kind="plus" /></ToolCell>
          <ToolCell type="button" $w={48} $top={10} aria-label="Ancrer"><DockIcon /></ToolCell>
        </Toolbar>
      </Window>

      <Behind aria-hidden="true">
        <Slice $h={100} $bg="#333437" />
        <Slice $h={864} $bg="#f4f4f4" $line={FRAME} />
        <Slice $h={50} $bg="linear-gradient(#e2f6fc, #c9dbe5)" $line={FRAME}>D</Slice>
        <Slice $h={41} $bg={BAR} />
        <Slice $h={32} $bg="#5088b8" $ink="#fff">s</Slice>
        <Slice $h={32} $bg="#dfeef6" />
        <Slice $h={32} $bg="#d8e0e6" />
        <Slice $h={18} $bg="#dfeef6" $line="#a01e28" />
        <Slice $h={14} $bg="#dfeef6" />
        <Slice $h={32} $bg="#d8e0e6" />
        <Slice $h={32} $bg="#dfeef6" />
        <Slice $h={32} $bg="#d8e0e6" />
        <Slice $h={32} $bg="#dfeef6" />
      </Behind>

      <Annotations aria-hidden="true">
        <g fill="none" stroke={INK} strokeWidth="5">
          <ellipse cx="429" cy="239" rx="450" ry="148" />
          <ellipse cx="236" cy="790" rx="209" ry="424" />
        </g>
      </Annotations>
    </Desktop>
  );
}
